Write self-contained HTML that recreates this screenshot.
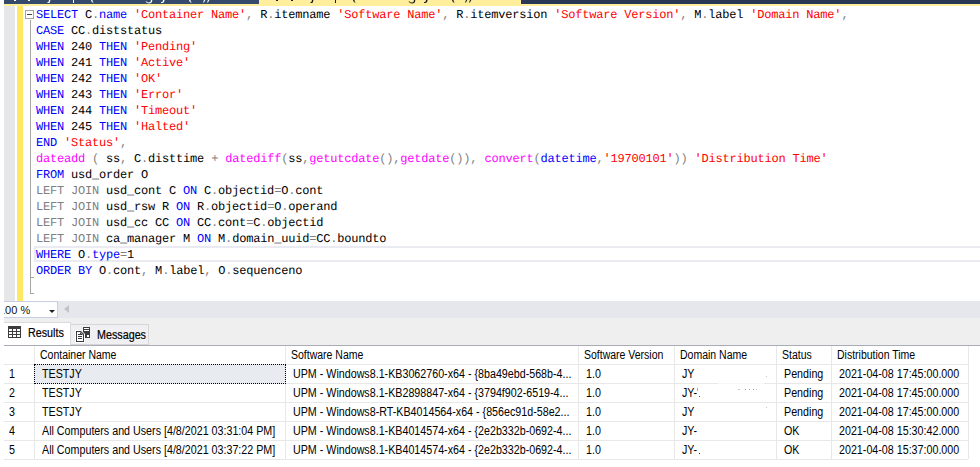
<!DOCTYPE html>
<html><head><meta charset="utf-8">
<style>
*{margin:0;padding:0;box-sizing:border-box}
html,body{width:980px;height:467px;overflow:hidden;background:#fff}
body{position:relative;font-family:"Liberation Sans",sans-serif}
.abs{position:absolute}
#tabwell{position:absolute;left:4px;top:0;width:976px;height:4px;background:#293955}
#tab1{position:absolute;left:4px;top:0;width:255px;height:4px;background:#364b6c}
#acttab{position:absolute;left:259px;top:0;width:262px;height:4px;background:#ffef9c}
#tabline{position:absolute;left:4px;top:4px;width:976px;height:2px;background:#ffef9c}
#margin{position:absolute;left:4px;top:6px;width:11px;height:295px;background:#e6e7e9}
#track{position:absolute;left:17px;top:6px;width:6px;height:295px;background:#fee965}
#foldbox{position:absolute;left:25px;top:10px;width:9px;height:9px;border:1px solid #a5a5a5;background:#fff}
#foldbox:after{content:"";position:absolute;left:1px;top:3px;width:5px;height:1px;background:#444}
#foldline{position:absolute;left:30px;top:20px;width:1px;height:274px;background:#a5a5a5}
.tick{position:absolute;left:30px;width:4px;height:1px;background:#a5a5a5}
#curline{position:absolute;left:34px;top:246px;width:946px;height:16px;border:2px solid #eaeaf2;border-right:none}
#code{position:absolute;left:36px;top:7px;font-family:"Liberation Mono",monospace;font-size:12px;text-rendering:geometricPrecision;letter-spacing:-0.2px;line-height:16px;color:#000;white-space:pre}
#code i{font-style:normal}
.ln{height:16px}
.k{color:#0000ff}.s{color:#ff0000}.g{color:#808080}.f{color:#ff00ff}
#hscroll{position:absolute;left:4px;top:301px;width:976px;height:17px;background:#e6e7ed}
#zoom{position:absolute;left:4px;top:301px;width:54px;height:17px;background:#fff;border:1px solid #c6cfe5;border-left:none;overflow:hidden}
#zoomtxt{position:absolute;left:-5px;top:2px;font-size:11px;line-height:12px;color:#111;white-space:pre}
#zarrow{position:absolute;left:45px;top:8px;width:0;height:0;border-left:3px solid transparent;border-right:3px solid transparent;border-top:3px solid #1e1e1e}
#larrow{position:absolute;left:64px;top:305px;width:0;height:0;border-top:4px solid transparent;border-bottom:4px solid transparent;border-right:5px solid #c2c3c9}
#tabarea{position:absolute;left:4px;top:318px;width:976px;height:27px;background:#efeff0}
#restab{position:absolute;left:4px;top:322px;width:67px;height:23px;background:#fff;border:1px solid #dadade;border-bottom:none;border-left:none}
#msgtab{position:absolute;left:70px;top:324px;width:79px;height:21px;background:#f0f0f2;border:1px solid #d6d6da}
#tabbottom{position:absolute;left:4px;top:345px;width:976px;height:1px;background:#a9acb4}
.tabtxt{position:absolute;font-size:12.5px;color:#000;-webkit-text-stroke:0.2px #000;white-space:pre;transform:scaleX(0.86);transform-origin:0 0}
.hl{position:absolute;left:4px;width:964px;height:1px;background:#e8e8e8}
.vl{position:absolute;top:346px;width:1px;height:113px;background:#e8e8e8}
.t{position:absolute;height:18px;line-height:18px;font-size:12px;color:#000;white-space:pre;transform:scaleX(0.875);transform-origin:0 0}
.d{line-height:19px;height:19px;margin-top:1px;transform:scaleX(0.892)}
.sel{position:absolute;background:#e8ebf0;border:1px dotted #000}
</style></head><body>
<div id="tabwell"></div><div id="tab1"></div><div id="acttab"></div><div id="tabline"></div>
<svg class="abs" style="left:0;top:0" width="530" height="4" viewBox="0 0 530 4"><g fill="#fff"><rect x="14" y="0" width="2" height="1"/><rect x="28" y="0" width="2" height="1"/><path d="M49 0h1.5l-1 3h-2v-1h1z"/><rect x="73" y="0" width="1" height="3"/><path d="M91 0h1.5q0 2 1 2.5v0.5q-2.5 -1 -2.5 -3z"/><path d="M146 1q1 1.5 3 1.5q2 0 2-2.5h1.3q0 3.5-3.3 3.5q-2.5 0-3.5-2.5z"/><path d="M163 0h1.5q0 3-2.5 3h-1v-1h1q1 0 1-2z"/><path d="M189 0h1.5q0 1.5 1 2.5v0.5q-2.5-1-2.5-3z"/><path d="M204 0h1.3l-1.3 2.5h-1z"/><path d="M208 0h1.3l-1.3 2.5h-1z"/></g>
<g fill="#1a1a1a"><rect x="276" y="0" width="2" height="1"/><rect x="291" y="0" width="2" height="1"/><path d="M312 0h1.5l-1 3h-2v-1h1z"/><rect x="335" y="0" width="1" height="3"/><path d="M353 0h1.5q0 2 1 2.5v0.5q-2.5 -1 -2.5 -3z"/><path d="M409 1q1 1.5 3 1.5q2 0 2-2.5h1.3q0 3.5-3.3 3.5q-2.5 0-3.5-2.5z"/><path d="M426 0h1.5q0 3-2.5 3h-1v-1h1q1 0 1-2z"/><path d="M452 0h1.5q0 1.5 1 2.5v0.5q-2.5-1-2.5-3z"/><path d="M466 0h1.3l-1.3 2.5h-1z"/><path d="M470 0h1.3l-1.3 2.5h-1z"/></g></svg>
<div id="margin"></div><div id="track"></div>
<div id="curline"></div>
<div id="foldbox"></div><div id="foldline"></div>
<div class="tick" style="top:277px"></div><div class="tick" style="top:293px"></div>
<div id="code"><div class="ln"><i class="k">SELECT</i> C<i class="g">.</i><i class="k">name</i> <i class="s">&#x27;Container Name&#x27;</i><i class="g">,</i> R<i class="g">.</i>itemname <i class="s">&#x27;Software Name&#x27;</i><i class="g">,</i> R<i class="g">.</i>itemversion <i class="s">&#x27;Software Version&#x27;</i><i class="g">,</i> M<i class="g">.</i>label <i class="s">&#x27;Domain Name&#x27;</i><i class="g">,</i></div><div class="ln"><i class="k">CASE</i> CC<i class="g">.</i>diststatus</div><div class="ln"><i class="k">WHEN</i> 240 <i class="k">THEN</i> <i class="s">&#x27;Pending&#x27;</i></div><div class="ln"><i class="k">WHEN</i> 241 <i class="k">THEN</i> <i class="s">&#x27;Active&#x27;</i></div><div class="ln"><i class="k">WHEN</i> 242 <i class="k">THEN</i> <i class="s">&#x27;OK&#x27;</i></div><div class="ln"><i class="k">WHEN</i> 243 <i class="k">THEN</i> <i class="s">&#x27;Error&#x27;</i></div><div class="ln"><i class="k">WHEN</i> 244 <i class="k">THEN</i> <i class="s">&#x27;Timeout&#x27;</i></div><div class="ln"><i class="k">WHEN</i> 245 <i class="k">THEN</i> <i class="s">&#x27;Halted&#x27;</i></div><div class="ln"><i class="k">END</i> <i class="s">&#x27;Status&#x27;</i><i class="g">,</i></div><div class="ln"><i class="f">dateadd</i> <i class="g">(</i> ss<i class="g">,</i> C<i class="g">.</i>disttime <i class="g">+</i> <i class="f">datediff</i><i class="g">(</i>ss<i class="g">,</i><i class="f">getutcdate</i><i class="g">(</i><i class="g">)</i><i class="g">,</i><i class="f">getdate</i><i class="g">(</i><i class="g">)</i><i class="g">)</i><i class="g">,</i> <i class="f">convert</i><i class="g">(</i><i class="k">datetime</i><i class="g">,</i><i class="s">&#x27;19700101&#x27;</i><i class="g">)</i><i class="g">)</i> <i class="s">&#x27;Distribution Time&#x27;</i></div><div class="ln"><i class="k">FROM</i> usd_order O</div><div class="ln"><i class="g">LEFT</i> <i class="g">JOIN</i> usd_cont C <i class="k">ON</i> C<i class="g">.</i>objectid<i class="g">=</i>O<i class="g">.</i>cont</div><div class="ln"><i class="g">LEFT</i> <i class="g">JOIN</i> usd_rsw R <i class="k">ON</i> R<i class="g">.</i>objectid<i class="g">=</i>O<i class="g">.</i>operand</div><div class="ln"><i class="g">LEFT</i> <i class="g">JOIN</i> usd_cc CC <i class="k">ON</i> CC<i class="g">.</i>cont<i class="g">=</i>C<i class="g">.</i>objectid</div><div class="ln"><i class="g">LEFT</i> <i class="g">JOIN</i> ca_manager M <i class="k">ON</i> M<i class="g">.</i>domain_uuid<i class="g">=</i>CC<i class="g">.</i>boundto</div><div class="ln"><i class="k">WHERE</i> O<i class="g">.</i><i class="k">type</i><i class="g">=</i>1</div><div class="ln"><i class="k">ORDER</i> <i class="k">BY</i> O<i class="g">.</i>cont<i class="g">,</i> M<i class="g">.</i>label<i class="g">,</i> O<i class="g">.</i>sequenceno</div></div>
<div id="hscroll"></div>
<div id="zoom"><div id="zoomtxt">100 %</div><div id="zarrow"></div></div>
<div id="larrow"></div>
<div id="tabarea"></div>
<div id="msgtab"></div>
<div id="restab"></div>
<div id="tabbottom"></div>
<svg class="abs" style="left:8px;top:326px" width="13" height="12" viewBox="0 0 13 12"><rect x="0" y="0" width="13" height="12" fill="#3c3c3c"/><g fill="#fff"><rect x="1" y="3" width="3" height="2"/><rect x="5" y="3" width="3" height="2"/><rect x="9" y="3" width="3" height="2"/><rect x="1" y="6" width="3" height="2"/><rect x="5" y="6" width="3" height="2"/><rect x="9" y="6" width="3" height="2"/><rect x="1" y="9" width="3" height="2"/><rect x="5" y="9" width="3" height="2"/><rect x="9" y="9" width="3" height="2"/></g></svg>
<div class="tabtxt" style="left:28px;top:326px">Results</div>
<svg class="abs" style="left:75px;top:326px" width="17" height="17" viewBox="0 0 17 17"><rect x="8" y="1" width="7" height="11" fill="#3c3c3c"/><rect x="9" y="2" width="5" height="1" fill="#fff"/><rect x="9" y="4" width="5" height="1" fill="#fff"/><rect x="12" y="9" width="2" height="2" fill="#fff"/><path d="M0 4h6l4 4v9h-10z" fill="#fff"/><path d="M1 5h5l3 3v8h-8z" fill="#3c3c3c"/><path d="M2 6h3.5l2.5 2.5v6.5h-6z" fill="#fff"/><rect x="3" y="8" width="3" height="1" fill="#3c3c3c"/><rect x="3" y="10" width="4" height="1" fill="#3c3c3c"/><rect x="3" y="12" width="4" height="1" fill="#3c3c3c"/><path d="M5 6l3 3h-3z" fill="#3c3c3c"/></svg>
<div class="tabtxt" style="left:97px;top:328px">Messages</div>
<div class="hl" style="top:364px"></div>
<div class="hl" style="top:383px"></div>
<div class="hl" style="top:402px"></div>
<div class="hl" style="top:421px"></div>
<div class="hl" style="top:440px"></div>
<div class="hl" style="top:459px"></div>
<div class="vl" style="left:34px"></div>
<div class="vl" style="left:285px"></div>
<div class="vl" style="left:578px"></div>
<div class="vl" style="left:674px"></div>
<div class="vl" style="left:776px"></div>
<div class="vl" style="left:831px"></div>
<div class="vl" style="left:968px"></div>
<div class="t" style="left:40px;top:346px">Container Name</div>
<div class="t" style="left:291px;top:346px">Software Name</div>
<div class="t" style="left:584px;top:346px">Software Version</div>
<div class="t" style="left:680px;top:346px">Domain Name</div>
<div class="t" style="left:782px;top:346px">Status</div>
<div class="t" style="left:837px;top:346px">Distribution Time</div>
<div class="sel" style="left:34px;top:364px;width:252px;height:20px"></div>
<div class="t d" style="left:9px;top:364px">1</div>
<div class="t d" style="left:42px;top:364px">TESTJY</div>
<div class="t d" style="left:293px;top:364px">UPM - Windows8.1-KB3062760-x64 - {8ba49ebd-568b-4...</div>
<div class="t d" style="left:586px;top:364px">1.0</div>
<div class="t d" style="left:682px;top:364px">JY</div>
<div class="t d" style="left:784px;top:364px">Pending</div>
<div class="t d" style="left:839px;top:364px">2021-04-08 17:45:00.000</div>
<div class="t d" style="left:9px;top:383px">2</div>
<div class="t d" style="left:42px;top:383px">TESTJY</div>
<div class="t d" style="left:293px;top:383px">UPM - Windows8.1-KB2898847-x64 - {3794f902-6519-4...</div>
<div class="t d" style="left:586px;top:383px">1.0</div>
<div class="t d" style="left:682px;top:383px">JY-</div>
<div class="t d" style="left:784px;top:383px">Pending</div>
<div class="t d" style="left:839px;top:383px">2021-04-08 17:45:00.000</div>
<div class="t d" style="left:9px;top:402px">3</div>
<div class="t d" style="left:42px;top:402px">TESTJY</div>
<div class="t d" style="left:293px;top:402px">UPM - Windows8-RT-KB4014564-x64 - {856ec91d-58e2...</div>
<div class="t d" style="left:586px;top:402px">1.0</div>
<div class="t d" style="left:682px;top:402px">JY</div>
<div class="t d" style="left:784px;top:402px">Pending</div>
<div class="t d" style="left:839px;top:402px">2021-04-08 17:45:00.000</div>
<div class="t d" style="left:9px;top:421px">4</div>
<div class="t d" style="left:42px;top:421px">All Computers and Users [4/8/2021 03:31:04 PM]</div>
<div class="t d" style="left:293px;top:421px">UPM - Windows8.1-KB4014574-x64 - {2e2b332b-0692-4...</div>
<div class="t d" style="left:586px;top:421px">1.0</div>
<div class="t d" style="left:682px;top:421px">JY-</div>
<div class="t d" style="left:784px;top:421px">OK</div>
<div class="t d" style="left:839px;top:421px">2021-04-08 15:30:42.000</div>
<div class="t d" style="left:9px;top:440px">5</div>
<div class="t d" style="left:42px;top:440px">All Computers and Users [4/8/2021 03:37:22 PM]</div>
<div class="t d" style="left:293px;top:440px">UPM - Windows8.1-KB4014574-x64 - {2e2b332b-0692-4...</div>
<div class="t d" style="left:586px;top:440px">1.0</div>
<div class="t d" style="left:682px;top:440px">JY-</div>
<div class="t d" style="left:784px;top:440px">OK</div>
<div class="t d" style="left:839px;top:440px">2021-04-08 15:37:00.000</div>
<div class="abs" style="left:718px;top:383px;width:46px;height:1px;background:#f8f8f8"></div>
<svg class="abs" style="left:690px;top:376px" width="90" height="80" viewBox="0 0 90 80"><g fill="#9aa8c8"><rect x="7" y="12" width="1" height="3"/><rect x="9" y="20" width="1" height="1" fill="#a04020"/><rect x="48" y="13" width="2" height="1" opacity="0.6"/><rect x="55" y="13" width="1" height="1"/><rect x="59" y="13" width="1" height="1"/><rect x="63" y="13" width="1" height="1"/><rect x="66" y="13" width="1" height="1" opacity="0.6"/><rect x="76" y="0" width="1" height="1" opacity="0.6"/><rect x="76" y="31" width="1" height="1" opacity="0.6"/><rect x="9" y="77" width="1" height="1" fill="#402020"/></g></svg>

</body></html>
